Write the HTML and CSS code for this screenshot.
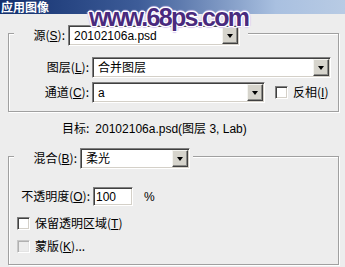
FILE: index.html
```html
<!DOCTYPE html>
<html>
<head>
<meta charset="utf-8">
<link rel="stylesheet" href="styles.css">
</head>
<body>
<div class="titlebar"><span class="ttext">应用图像</span></div>
<div class="dialog">
  <div class="group group1">
    <div class="legend legend1">
      <span class="lbl">源(<u>S</u>):</span>
      <div class="select w-src"><span class="val">20102106a.psd</span><span class="btn"><i></i></span></div>
    </div>
    <div class="row row-layer">
      <span class="lbl lbl-col">图层(<u>L</u>):</span>
      <div class="select grow"><span class="val">合并图层</span><span class="btn"><i></i></span></div>
    </div>
    <div class="row row-chan">
      <span class="lbl lbl-col">通道(<u>C</u>):</span>
      <div class="select w-chan"><span class="val">a</span><span class="btn"><i></i></span></div>
      <span class="check"></span><span class="ctext">反相(<u>I</u>)</span>
    </div>
  </div>
  <div class="target"><span>目标:</span><span class="tval">20102106a.psd(图层 3, Lab)</span></div>
  <div class="group group2">
    <div class="legend legend2">
      <span class="lbl">混合(<u>B</u>):</span>
      <div class="select w-blend"><span class="val">柔光</span><span class="btn"><i></i></span></div>
    </div>
    <div class="row row-op">
      <span class="lbl lbl-op">不透明度(<u>O</u>):</span>
      <div class="input">100</div>
      <span class="pct">%</span>
    </div>
    <div class="row row-c1">
      <span class="check"></span><span class="ctext">保留透明区域(<u>T</u>)</span>
    </div>
    <div class="row row-c2">
      <span class="check disabled"></span><span class="ctext">蒙版(<u>K</u>)...</span>
    </div>
  </div>
</div>
<div class="watermark">www.68ps.com</div>
</body>
</html>
```
FILE: styles.css
```css
html, body {
  margin: 0;
  padding: 0;
}
body {
  width: 345px;
  height: 267px;
  overflow: hidden;
  position: relative;
  background: #ededed;
  font-family: "Liberation Sans", "Noto Sans CJK SC", sans-serif;
  font-size: 12px;
  color: #000;
}
u { text-decoration: underline; }

.titlebar {
  height: 14px;
  background: linear-gradient(to right, #13306e 0%, #3d5c98 40%, #a9c0e0 80%, #b8cbe4 100%);
  display: flex;
  align-items: center;
  padding-left: 1px;
}
.ttext {
  color: #fff;
  font-weight: bold;
  font-size: 12px;
  line-height: 14px;
  font-family: "Noto Sans CJK SC", sans-serif;
  white-space: nowrap;
}

.dialog {
  padding: 0 0 0 8px;
  width: 331px;
}

.group {
  border: 1px solid #a0a0a0;
  box-shadow: inset 1px 1px 0 #fff, 1px 1px 0 #fff;
  padding-right: 7px;
}
.group1 {
  margin-top: 19px;
  padding-bottom: 8px;
}
.group2 {
  margin-top: 20px;
  padding-bottom: 10px;
}

.legend {
  display: flex;
  align-items: center;
  background: #ededed;
  margin-left: 5px;
  margin-top: -9px;
  width: fit-content;
}
.legend1 {
  padding-left: 14px;
  padding-right: 8px;
}
.legend1 .lbl { width: 37px; text-align: right; padding-right: 3px; }
.legend2 {
  padding-left: 10px;
  padding-right: 3px;
}
.legend2 .lbl { width: 53px; text-align: right; padding-right: 3px; }

.lbl {
  white-space: nowrap;
  font-family: "Noto Sans CJK SC", sans-serif;
  font-size: 12px;
  line-height: 14px;
}
.lbl u, .ctext u { font-family: "Liberation Sans", sans-serif; }

.row {
  display: flex;
  align-items: center;
}
.lbl-col {
  width: 80px;
  text-align: right;
  padding-right: 3px;
}
.row-layer { margin-top: 11px; }
.row-chan { margin-top: 4px; }

.select {
  box-sizing: border-box;
  height: 21px;
  background: #fff;
  border-top: 1px solid #808080;
  border-left: 1px solid #808080;
  border-right: 1px solid #fff;
  border-bottom: 1px solid #fff;
  box-shadow: inset 1px 1px 0 #404040, inset -1px -1px 0 #d4d0c8;
  display: flex;
  align-items: center;
  justify-content: space-between;
  padding: 1px 1px 1px 5px;
}
.select .val {
  white-space: nowrap;
  line-height: 14px;
  font-family: "Liberation Sans", "Noto Sans CJK SC", sans-serif;
}
.w-src { width: 172px; }
.grow { flex: 1; }
.w-chan { width: 173px; }
.w-blend { width: 110px; }

.btn {
  box-sizing: border-box;
  width: 16px;
  height: 17px;
  background: #d6d4cc;
  border-top: 1px solid #f4f4f0;
  border-left: 1px solid #f4f4f0;
  border-right: 1px solid #404040;
  border-bottom: 1px solid #404040;
  box-shadow: inset -1px -1px 0 #8c8c88;
  display: flex;
  align-items: center;
  justify-content: center;
}
.btn i {
  display: block;
  width: 0;
  height: 0;
  border-left: 3px solid transparent;
  border-right: 3px solid transparent;
  border-top: 4px solid #000;
}

.check {
  box-sizing: border-box;
  width: 13px;
  height: 13px;
  background: #fff;
  border-top: 1px solid #808080;
  border-left: 1px solid #808080;
  border-right: 1px solid #fff;
  border-bottom: 1px solid #fff;
  box-shadow: inset 1px 1px 0 #404040, inset -1px -1px 0 #d4d0c8;
  flex: none;
}
.check.disabled {
  background: #ececec;
  border-top-color: #c8c8c8;
  border-left-color: #c8c8c8;
  box-shadow: inset 1px 1px 0 #b0b0b0, inset -1px -1px 0 #e4e4e4;
}
.ctext {
  margin-left: 5px;
  white-space: nowrap;
  font-family: "Noto Sans CJK SC", sans-serif;
  line-height: 14px;
}
.row-chan .check { margin-left: 10px; }

.target {
  margin-top: 9px;
  margin-left: 54px;
  line-height: 14px;
  white-space: nowrap;
  font-family: "Noto Sans CJK SC", sans-serif;
}
.tval {
  margin-left: 6px;
  font-family: "Liberation Sans", "Noto Sans CJK SC", sans-serif;
}

.row-op { margin-top: 18px; }
.lbl-op {
  width: 81px;
  text-align: right;
  padding-right: 3px;
}
.input {
  box-sizing: border-box;
  width: 40px;
  height: 19px;
  background: #fff;
  border-top: 1px solid #808080;
  border-left: 1px solid #808080;
  border-right: 1px solid #fff;
  border-bottom: 1px solid #fff;
  box-shadow: inset 1px 1px 0 #404040, inset -1px -1px 0 #d4d0c8;
  padding: 2px 0 0 2px;
  line-height: 14px;
}
.pct { margin-left: 11px; }

.row-c1 { margin-top: 10px; padding-left: 8px; }
.row-c2 { margin-top: 8px; padding-left: 8px; }

.watermark {
  position: absolute;
  left: 89px;
  top: 3px;
  font-family: "Liberation Sans", sans-serif;
  font-weight: bold;
  font-size: 25px;
  letter-spacing: -1.7px;
  line-height: 28px;
  color: #4a2a7e;
  text-shadow:
    1px 0 0 #fff, -1px 0 0 #fff, 0 1px 0 #fff, 0 -1px 0 #fff,
    1px 1px 0 #fff, -1px -1px 0 #fff, 1px -1px 0 #fff, -1px 1px 0 #fff,
    2px 0 1px #d8c8f0, -2px 0 1px #d8c8f0, 0 2px 1px #d8c8f0, 0 -2px 1px #d8c8f0;
}
```
